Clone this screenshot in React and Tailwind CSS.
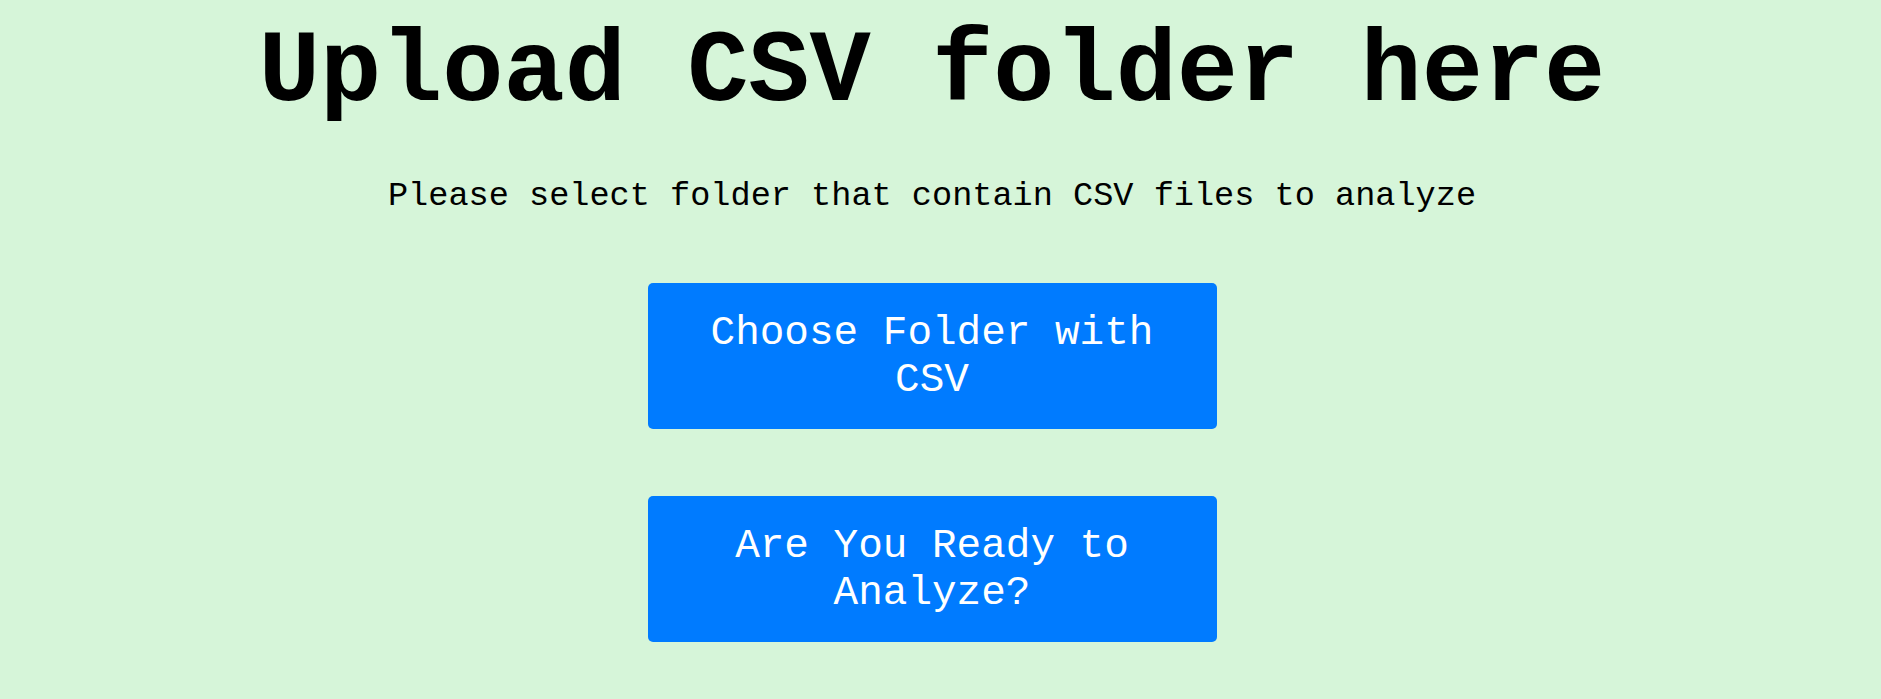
import React from "react";

function ActionButton({ children }) {
  return (
    <button
      type="button"
      className="w-[569px] rounded-[5px] bg-[#007bff] pt-[27px] pb-[26px] px-[40px] text-center text-[41px] leading-[46.5px] text-white"
    >
      {children}
    </button>
  );
}

export default function App() {
  return (
    <div className="min-h-screen w-full bg-[#d6f5d9] font-['Liberation_Mono','Courier_New',monospace]">
      <div className="w-[1864px] flex flex-col items-center pt-[15px] pb-[60px]">
        <h1 className="text-[102px] leading-[116px] font-bold text-black">Upload CSV folder here</h1>
        <p className="mt-[46px] text-[33.6px] leading-[38px] text-black">
          Please select folder that contain CSV files to analyze
        </p>
        <div className="mt-[68px] flex flex-col items-center gap-[67px]">
          <ActionButton>Choose Folder with CSV</ActionButton>
          <ActionButton>Are You Ready to Analyze?</ActionButton>
        </div>
      </div>
    </div>
  );
}
